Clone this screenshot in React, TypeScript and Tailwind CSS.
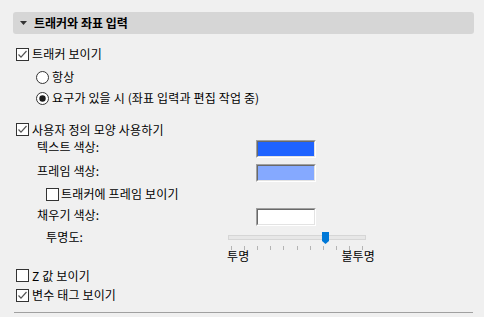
import React from "react";

const font = { fontFamily: '"Noto Sans CJK KR", "Noto Sans", sans-serif' };

function Check({ checked }: { checked: boolean }) {
  return (
    <svg width="13" height="13" viewBox="0 0 13 13" className="shrink-0">
      <rect x="0.5" y="0.5" width="12" height="12" fill="#fff" stroke="#333" />
      {checked && (
        <path d="M2.5 6.5 L5 9.2 L10.5 3" fill="none" stroke="#555" strokeWidth="1.2" />
      )}
    </svg>
  );
}

function Radio({ checked }: { checked: boolean }) {
  return (
    <svg width="13" height="13" viewBox="0 0 13 13" className="shrink-0">
      <circle cx="6.5" cy="6.5" r="6" fill="#fff" stroke="#333" />
      {checked && <circle cx="6.5" cy="6.5" r="3.2" fill="#1a1a1a" />}
    </svg>
  );
}

function Swatch({ color }: { color: string }) {
  return (
    <div className="mt-[1px] h-[18px] w-[60px] border border-t-[#a0a0a0] border-l-[#a0a0a0] border-b-white border-r-white">
      <div
        className="h-full w-full border border-t-[#696969] border-l-[#696969] border-b-[#e3e3e3] border-r-[#e3e3e3]"
        style={{ backgroundColor: color }}
      />
    </div>
  );
}

export default function App() {
  const ticks = Array.from({ length: 11 }, (_, i) => i);
  return (
    <div className="h-[317px] w-[484px] overflow-hidden bg-[#f0f0f0] pt-[12px] text-[12px] leading-[16px] tracking-[0.15px] text-black" style={font}>
      <div className="mx-[13px] flex h-[22px] w-[461px] items-center rounded-[3px] bg-[#d6d6d6]">
        <svg width="7" height="4" viewBox="0 0 7 4" className="ml-[7px]">
          <path d="M0 0 H7 L3.5 4 Z" fill="#333" />
        </svg>
        <span className="ml-[7px] font-bold tracking-[0px]">트래커와 좌표 입력</span>
      </div>

      <div className="ml-[16px] mt-[10px] flex h-[20px] items-center gap-[3px]">
        <Check checked />
        <span>트래커 보이기</span>
      </div>
      <div className="ml-[36px] mt-[3px] flex h-[20px] items-center gap-[3px]">
        <Radio checked={false} />
        <span>항상</span>
      </div>
      <div className="ml-[36px] mt-[1px] flex h-[20px] items-center gap-[3px]">
        <Radio checked />
        <span>요구가 있을 시 (좌표 입력과 편집 작업 중)</span>
      </div>

      <div className="ml-[16px] mt-[12px] flex h-[19px] items-center gap-[3px]">
        <Check checked />
        <span>사용자 정의 모양 사용하기</span>
      </div>

      <div className="flex h-[24px] items-start">
        <span className="ml-[37px] w-[219px]">텍스트 색상:</span>
        <Swatch color="#1f63ff" />
      </div>
      <div className="flex h-[21px] items-start">
        <span className="ml-[37px] w-[219px]">프레임 색상:</span>
        <Swatch color="#85a9ff" />
      </div>
      <div className="ml-[46px] flex h-[20px] items-center gap-[2px]">
        <Check checked={false} />
        <span>트래커에 프레임 보이기</span>
      </div>
      <div className="mt-[3px] flex h-[22px] items-start">
        <span className="ml-[37px] w-[219px]">채우기 색상:</span>
        <Swatch color="#ffffff" />
      </div>

      <div className="flex h-[32px] items-start">
        <span className="ml-[46px] w-[182px]">투명도:</span>
        <div className="relative w-[150px]">
          <div className="mt-[6px] h-[5px] w-[138px] border border-[#d6d6d6] bg-[#e7e7e7]" />
          <div className="relative mt-[6px] h-[4px]">
            {ticks.map((i) => (
              <div
                key={i}
                className="absolute top-0 h-[4px] w-px bg-[#b4b4b4]"
                style={{ left: `${3 + i * 13.1}px` }}
              />
            ))}
          </div>
          <svg width="8" height="12" viewBox="0 0 8 12" className="absolute left-[94px] top-[3px]">
            <path d="M0 0 H7 V9 L3.5 12 L0 9 Z" fill="#0078d7" />
          </svg>
          <div className="-ml-[1px] mt-[0px] flex w-[148px] justify-between leading-[12px]">
            <span>투명</span>
            <span>불투명</span>
          </div>
        </div>
      </div>

      <div className="ml-[16px] mt-[5px] flex h-[19px] items-center gap-[3px]">
        <Check checked={false} />
        <span>Z 값 보이기</span>
      </div>
      <div className="ml-[16px] flex h-[20px] items-center gap-[3px]">
        <Check checked />
        <span>변수 태그 보이기</span>
      </div>
      <div className="ml-[14px] mt-[7px] h-px w-[459px] bg-[#a0a0a0]" />
    </div>
  );
}
